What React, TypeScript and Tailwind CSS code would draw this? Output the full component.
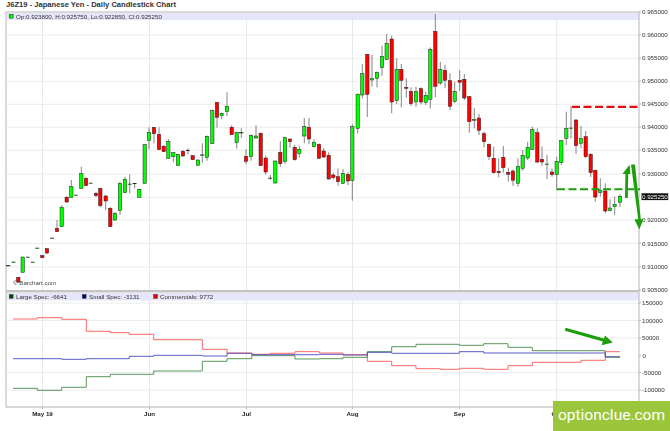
import React from 'react';

// x, high, body top, body bottom, low, colour
type Candle = [number, number, number, number, number, 'g' | 'r'];

const candles: Candle[] = [
  [8.3, 265.5, 265.5, 266, 266, 'g'], [13.5, 262, 262, 262.6, 262.6, 'g'], [18.3, 277, 277.5, 282, 283, 'r'],
  [22.7, 257, 257, 272.3, 272.3, 'g'], [28, 257, 257, 257.5, 257.5, 'g'], [32.7, 262, 262, 262.5, 262.5, 'g'],
  [37.3, 248, 248, 248.5, 248.5, 'g'], [42.3, 255, 255.7, 257.7, 258, 'r'], [47, 248, 248.7, 253, 254, 'r'],
  [52.3, 238, 238, 238.5, 238.5, 'g'], [57, 220, 228.3, 231.7, 232, 'r'], [61.7, 205, 207.3, 226.7, 227, 'g'],
  [66.7, 196, 197.3, 202, 203, 'r'], [71.3, 180, 186.7, 197.3, 198, 'g'], [76, 195, 195, 195.5, 195.5, 'g'],
  [81.3, 166.7, 173.7, 188.3, 189, 'g'], [86, 177, 178.3, 185.7, 186, 'r'], [90.7, 183, 183, 183.5, 183.5, 'g'],
  [96, 192, 193.3, 195.7, 197, 'r'], [100.3, 188, 188.3, 205.7, 207, 'r'], [105.7, 195, 196, 201, 210, 'r'],
  [110.3, 207, 208.3, 226.7, 227, 'r'], [115, 212, 213.3, 220, 221, 'g'], [120, 182, 183.3, 210.7, 215, 'g'],
  [125, 176.7, 179.3, 192.7, 193, 'g'], [129.7, 174.3, 184, 184.6, 193.3, 'g'], [134.7, 183, 183.3, 183.8, 188.3, 'g'],
  [139.3, 189, 189.3, 197.3, 197.5, 'g'], [144.7, 144, 144.7, 183.3, 183.5, 'g'], [149, 127.3, 132.3, 140.7, 149.3, 'g'],
  [154, 127, 127.3, 133.7, 143.3, 'r'], [159, 127.3, 134.3, 149.7, 150, 'r'], [163.7, 145, 146.3, 151.7, 152, 'r'],
  [168.3, 139, 141.3, 158.3, 158.5, 'g'], [173.3, 152, 152.7, 156.7, 162.3, 'g'], [178, 154, 154.3, 165.7, 166, 'g'],
  [183, 150, 151.3, 156, 156.5, 'r'], [188, 148.3, 150.2, 150.8, 154.3, 'g'], [192.7, 155, 155.7, 159.7, 160, 'r'],
  [198, 159.5, 160, 165.3, 165.5, 'g'], [202.3, 143.3, 154.8, 155.4, 162.7, 'g'], [207, 135.5, 136.3, 157.3, 160.7, 'g'],
  [212.3, 109.5, 110.7, 143.7, 144, 'g'], [217, 102, 102.3, 117.3, 127.7, 'r'], [221.7, 112.5, 113.3, 115.7, 119, 'g'],
  [227, 92.3, 106.3, 111.7, 116, 'g'], [231.7, 125.3, 127.3, 134.7, 135, 'r'], [236.7, 131.5, 132.3, 142.7, 148.7, 'g'],
  [241.3, 128.3, 132.5, 133, 138, 'g'], [246, 149.3, 156.3, 161.3, 164, 'r'], [251, 134.5, 135.3, 156.7, 160.7, 'g'],
  [256, 125.3, 136, 138, 139, 'g'], [260.7, 132.5, 133.3, 165.7, 166, 'r'], [265.7, 155.3, 158, 172, 174.7, 'r'],
  [270.3, 175, 178, 178.5, 180, 'g'], [275.3, 160.5, 161, 183, 183.5, 'g'], [280.3, 141.3, 152.3, 163.7, 166.7, 'r'],
  [285, 137, 137.7, 161.7, 164, 'g'], [290, 138.5, 139, 141.7, 147.7, 'r'], [294.7, 145, 147.3, 159.7, 160.7, 'r'],
  [299.3, 145.7, 149.3, 153.3, 157.3, 'g'], [304.3, 118, 126.7, 136, 143.3, 'g'], [309, 118, 127.3, 139, 144, 'r'],
  [314, 139.3, 142.3, 146.7, 147.5, 'g'], [319, 143.5, 144.3, 158.3, 159, 'r'], [323.7, 148.3, 151, 157, 158, 'r'],
  [328.7, 152.3, 155.3, 179, 179.5, 'r'], [333.3, 172.7, 175, 177.7, 179.3, 'r'],
  [338, 168.3, 176.7, 181.7, 185.7, 'r'], [343, 169, 173.3, 183.3, 184, 'g'], [348, 172.3, 174.3, 181, 185, 'r'],
  [352.3, 124, 126.7, 180.3, 200.7, 'g'], [357.7, 93.3, 94.3, 128.3, 133.3, 'g'], [362.3, 64, 73.7, 95, 98.3, 'g'],
  [367.3, 54, 54.3, 94.3, 117, 'r'], [372, 55, 78.7, 80, 86.7, 'g'], [377, 71.5, 72.3, 78.3, 87.3, 'g'],
  [382, 45.7, 56.3, 67.7, 75.7, 'g'], [386.7, 34, 43.3, 59.3, 60, 'g'], [391.7, 35.7, 39, 102, 113.3, 'r'],
  [396.7, 58.3, 69.3, 100.7, 104, 'g'], [401.3, 64, 69.3, 80.3, 107.3, 'r'], [406.3, 78.3, 87.3, 88.3, 97.7, 'r'],
  [411, 87.3, 91.3, 103.7, 106, 'r'], [416, 86.7, 91.3, 102, 106.7, 'g'], [421, 87.3, 88.7, 102, 104.3, 'r'],
  [425.7, 91.7, 95.3, 102.3, 105, 'g'], [430.3, 47.3, 49.3, 99.3, 108.3, 'g'], [435.3, 14, 31.3, 86.3, 97.3, 'r'],
  [440.3, 61.7, 69.7, 83, 85, 'g'], [445, 64.7, 70.3, 80.3, 88.3, 'r'], [450, 73.3, 80.7, 106.3, 110, 'r'],
  [454.7, 81.7, 91.3, 101.3, 103.3, 'g'], [459.7, 70, 80.3, 82.3, 91, 'r'], [464.3, 74, 79.3, 98, 100, 'r'],
  [469.3, 96, 96.7, 121.7, 132.7, 'r'], [474.3, 108.3, 119.3, 120.3, 128.3, 'g'], [479, 114, 118, 130.3, 135, 'r'],
  [484, 131.7, 133.7, 141.7, 147.3, 'r'], [489, 143.5, 144.3, 156.7, 160, 'r'], [493.7, 146.7, 158.3, 172.7, 173.5, 'r'],
  [498.7, 158.3, 171.3, 172.7, 177.3, 'r'], [503.3, 146, 157.3, 167.7, 172.7, 'r'], [508.3, 167.7, 172.3, 174.3, 181.7, 'r'],
  [513, 169.3, 171, 180.3, 186, 'r'], [518, 158.3, 166.3, 183.3, 186.7, 'g'], [522.7, 150, 155.3, 168.3, 170.7, 'g'],
  [527.7, 141.7, 147.3, 158, 160, 'g'], [532.3, 126.7, 129.7, 149.3, 150, 'g'], [537.3, 128.3, 132.7, 162, 163.3, 'r'],
  [542, 146.7, 159.3, 162, 166, 'r'], [547, 155, 164, 164.5, 179.3, 'g'], [552, 168.3, 172, 174.7, 176.7, 'r'],
  [556.7, 156.7, 161.3, 174.7, 190, 'g'], [561.3, 140, 140.7, 162.7, 165, 'g'], [566.3, 111.7, 128.7, 138.3, 145, 'g'],
  [571, 106, 128, 128.5, 138.3, 'g'], [576, 119, 120, 145.7, 154, 'r'], [581, 126, 138.7, 143.3, 148.3, 'g'],
  [585.7, 131, 136.7, 156.7, 158, 'r'], [590.7, 153, 154.3, 172.7, 177, 'r'], [595.3, 169.5, 170.3, 197, 201.7, 'r'],
  [600.3, 178.3, 190.3, 192.7, 196.7, 'g'], [605.3, 183.3, 191, 211, 213.3, 'r'], [610, 199.3, 208, 210.7, 211.5, 'g'],
  [614.7, 196.7, 204.3, 206.7, 215, 'g'], [620, 194, 196.3, 202.3, 207, 'g'],
];

const priceRows = [
  ['0.965000', 12], ['0.960000', 35], ['0.955000', 58], ['0.950000', 81], ['0.945000', 104], ['0.940000', 127],
  ['0.935000', 150], ['0.930000', 174], ['0.920000', 220], ['0.915000', 243.3], ['0.910000', 267], ['0.905000', 290],
] as const;

const cotRows = [
  ['150000', 303], ['100000', 320.5], ['50000', 338], ['0', 355.5], ['-50000', 372.5], ['-100000', 390],
] as const;

const priceGrid = [35, 58.7, 81.3, 104.3, 127.3, 150.3, 174, 197.3, 220, 243.3, 267];
const months = [['May 19', 42.5], ['Jun', 149.5], ['Jul', 246.5], ['Aug', 352.5], ['Sep', 459.5], ['Oct', 556.7]] as const;

const redLine = [[13, 319], [37.3, 317.7], [61.7, 319.3], [86.3, 331.3], [110.3, 332.7], [129.3, 334.3], [153.7, 339.7], [202.3, 349.3], [227, 353], [251.7, 354.3], [270.3, 353.3], [295, 351.7], [319.3, 353], [343, 354.7], [367.3, 361.3], [391.7, 365.7], [416, 368.7], [440.3, 369.3], [459.3, 368.3], [483.7, 369.3], [508, 365.7], [532.3, 362.3], [581, 360.3], [605.3, 351.7], [620, 351.7]];
const blueLine = [[13, 358.7], [61.7, 359.3], [86.3, 358.7], [129.3, 356.3], [153.7, 355.3], [202.3, 356], [227, 353.3], [251.7, 354.7], [295, 354.7], [319.3, 354.3], [343, 355], [367.3, 352.3], [391.7, 353.3], [459.3, 351.7], [483.7, 353], [605.3, 356.7], [620, 356.7]];
const greenLine = [[13, 388.3], [37.3, 390.3], [61.7, 387.3], [86.3, 376.7], [110.3, 374.3], [153.7, 371], [202.3, 361.3], [227, 358.7], [251.7, 355.7], [295, 359], [319.3, 358.7], [343, 357.3], [367.3, 351.7], [391.7, 346.7], [416, 344.3], [459.3, 345.3], [483.7, 343.7], [508, 347.3], [532.3, 350.7], [605.3, 357.3], [620, 357.3]];

// COT series are weekly, so each value holds until the next one
function stepPath(points: number[][]) {
  let d = `M${points[0][0]} ${points[0][1]}`;
  for (let i = 1; i < points.length; i++) {
    d += `H${points[i][0]}V${points[i][1]}`;
  }
  return d;
}

const legendText = 'fill-[#333] text-[6.2px]';

const Chart = () => (
  <svg className="block h-[423px] w-[670px] blur-[0.3px]" viewBox="0 8 670 423" style={{ fontFamily: '"Liberation Sans", Arial, sans-serif' }}>
    {/* legend bands */}
    <rect x="7" y="13" width="632" height="7" fill="#e6e6fb" />
    <rect x="7" y="293" width="632" height="7.5" fill="#e6e6fb" />

    {/* grid */}
    {priceGrid.map((y) => (
      <line key={y} x1="7" x2="639" y1={y} y2={y} stroke="#ececec" strokeWidth="1" />
    ))}
    {cotRows.filter(([, y]) => y !== 355.5).map(([, y]) => (
      <line key={y} x1="7" x2="639" y1={y} y2={y} stroke="#ececec" strokeWidth="1" />
    ))}
    {months.map(([label, x]) => (
      <g key={label}>
        <line x1={x} x2={x} y1="20" y2="290" stroke="#e8e8e8" strokeWidth="1" />
        <line x1={x} x2={x} y1="300" y2="407" stroke="#e8e8e8" strokeWidth="1" />
        <line x1={x} x2={x} y1="407" y2="409" stroke="#999" strokeWidth="0.7" />
        <text x={x} y="415.5" textAnchor="middle" className="fill-[#222] text-[6.2px] font-bold">{label}</text>
      </g>
    ))}

    {/* frame */}
    <rect x="6" y="12" width="633" height="395" fill="none" stroke="#b5b5b5" strokeWidth="1" />
    <line x1="6" x2="639" y1="291.2" y2="291.2" stroke="#c4c4c4" strokeWidth="2.4" />

    {/* candles */}
    {candles.map(([x, high, top, bottom, low, colour]) => (
      <g key={x}>
        <line x1={x} x2={x} y1={high} y2={low} stroke="#666" strokeWidth="0.8" />
        <rect
          x={x - 1.7}
          y={top}
          width="3.4"
          height={bottom - top}
          fill={colour === 'g' ? '#00ff00' : '#ff0000'}
          stroke="#222"
          strokeWidth="0.5"
        />
      </g>
    ))}

    {/* COT lines */}
    <path d={stepPath(redLine)} fill="none" stroke="#ff5555" strokeWidth="0.9" />
    <path d={stepPath(greenLine)} fill="none" stroke="#478a47" strokeWidth="0.9" />
    <path d={stepPath(blueLine)} fill="none" stroke="#4a4ac4" strokeWidth="0.9" />

    {/* legends */}
    <rect x="9.3" y="14.3" width="3.8" height="3.8" fill="#00ff00" stroke="#333" strokeWidth="0.6" />
    <text x="16" y="18.8" className={legendText}>Op:0.923800, H:0.925750, Lo:0.922850, Cl:0.925250</text>
    <rect x="9.3" y="294.5" width="3.8" height="3.8" fill="#004d00" stroke="#333" strokeWidth="0.5" />
    <text x="16" y="299" className={legendText}>Large Spec: -6641</text>
    <rect x="82.3" y="294.5" width="3.8" height="3.8" fill="#00007f" stroke="#333" strokeWidth="0.5" />
    <text x="89" y="299" className={legendText}>Small Spec: -3131</text>
    <rect x="153.7" y="294.5" width="3.8" height="3.8" fill="#e00000" stroke="#333" strokeWidth="0.5" />
    <text x="160" y="299" className={legendText}>Commercials: 9772</text>
    <text x="13" y="284.8" className="fill-[#444] text-[6.2px]">© Barchart.com</text>

    {/* axis */}
    {priceRows.map(([label, y]) => (
      <g key={label}>
        <line x1="639" x2="641" y1={y} y2={y} stroke="#999" strokeWidth="0.7" />
        <text x="642" y={y + 2.3} className={legendText}>{label}</text>
      </g>
    ))}
    {cotRows.map(([label, y]) => (
      <g key={label}>
        <line x1="639" x2="641" y1={y} y2={y} stroke="#999" strokeWidth="0.7" />
        <text x={label === '0' ? 642.5 : 642} y={y + 2.3} className={legendText}>{label}</text>
      </g>
    ))}
    <rect x="641.5" y="193.3" width="26.7" height="6.8" fill="#111" />
    <text x="642" y="199" className="fill-white text-[6.2px]">0.925250</text>

    {/* hand-drawn marks */}
    <path d="M572 106.8H639" stroke="#e00d0d" strokeWidth="2.2" strokeDasharray="8 3.5" fill="none" />
    <path d="M557 189.2H640" stroke="#1c9f0a" strokeWidth="2" strokeDasharray="8 3.5" fill="none" />
    <g fill="#1c9f0a" stroke="none">
      <path d="M625 198L625.4 174H622.4L629.6 164.8L630.4 174H628.2L627.8 198Z" />
      <path d="M631 164.6H635L640.8 219.3H643.4L639.3 229.5L634.4 219.3H638.2Z" />
      <path d="M565.6 327.8L564.8 330.8L602.8 341.6L601.6 345.2L612.8 342.6L605 335.6L604 338.4Z" />
    </g>
  </svg>
);

export default function App() {
  return (
    <div className="relative h-[431px] w-[670px] overflow-hidden bg-white font-['Liberation_Sans',Arial,sans-serif]">
      <div className="h-2 pl-1.5 text-[7.6px] leading-[10px] font-bold text-[#333]">
        J6Z19 - Japanese Yen - Daily Candlestick Chart
      </div>
      <Chart />
      <div className="absolute right-0 bottom-0 flex h-[30px] w-[117px] items-center justify-center bg-[#9bc63c] font-['Roboto',sans-serif] text-[15.5px] text-white">
        optionclue.com
      </div>
    </div>
  );
}
